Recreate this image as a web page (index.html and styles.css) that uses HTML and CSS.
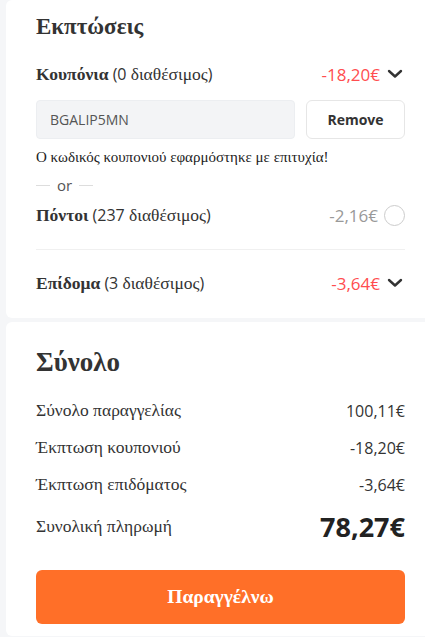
FILE: index.html
```html
<!DOCTYPE html>
<html lang="el">
<head>
    <meta charset="UTF-8">
    <meta name="viewport" content="width=device-width, initial-scale=1.0">
    <title>Ολοκλήρωση παραγγελίας</title>
    <link rel="stylesheet" href="styles.css">
</head>
<body>

<div class="card discounts">
    <h2 class="title gr">Εκπτώσεις</h2>

    <div class="row">
        <div class="label"><b class="gr">Κουπόνια</b> (0 <span class="gr">διαθέσιμος</span>)</div>
        <div class="value red">-18,20€
            <svg class="chevron" width="16" height="10" viewBox="0 0 16 10"><path d="M2 2l6 5.5L14 2" fill="none" stroke="#333" stroke-width="2.4" stroke-linecap="round" stroke-linejoin="round"/></svg>
        </div>
    </div>

    <div class="coupon">
        <input type="text" class="coupon-input" value="BGALIP5MN">
        <button class="remove-btn">Remove</button>
    </div>
    <p class="success gr">Ο κωδικός κουπονιού εφαρμόστηκε με επιτυχία!</p>

    <div class="or"><span class="or-line"></span>or<span class="or-line"></span></div>

    <div class="row points">
        <div class="label"><b class="gr">Πόντοι</b> (237 <span class="gr">διαθέσιμος</span>)</div>
        <div class="value grey">-2,16€ <span class="radio"></span></div>
    </div>

    <div class="divider"></div>

    <div class="row">
        <div class="label"><b class="gr">Επίδομα</b> (3 <span class="gr">διαθέσιμος</span>)</div>
        <div class="value red">-3,64€
            <svg class="chevron" width="16" height="10" viewBox="0 0 16 10"><path d="M2 2l6 5.5L14 2" fill="none" stroke="#333" stroke-width="2.4" stroke-linecap="round" stroke-linejoin="round"/></svg>
        </div>
    </div>
</div>

<div class="card summary">
    <h2 class="title big gr">Σύνολο</h2>

    <div class="sum-row"><span class="gr">Σύνολο παραγγελίας</span><span>100,11€</span></div>
    <div class="sum-row"><span class="gr">Έκπτωση κουπονιού</span><span>-18,20€</span></div>
    <div class="sum-row"><span class="gr">Έκπτωση επιδόματος</span><span>-3,64€</span></div>
    <div class="sum-row total"><span class="gr">Συνολική πληρωμή</span><span class="total-price">78,27€</span></div>

    <button class="order-btn gr">Παραγγέλνω</button>
</div>

</body>
</html>
```

FILE: styles.css
```css
body {
    margin: 0;
    padding-left: 6px;
    background-color: #f5f6f8;
    font-family: "Open Sans", sans-serif;
    color: #333;
}

.gr {
    font-family: "Liberation Serif", "DejaVu Serif", serif;
}

.card {
    background-color: #fff;
    border-radius: 6px 0 0 6px;
    padding: 0 20px 0 30px;
}

.discounts {
    padding-top: 12px;
    padding-bottom: 19px;
    margin-bottom: 4px;
}

.title {
    margin: 0;
    font-size: 23px;
    font-weight: bold;
    color: #333;
    line-height: 30px;
}

.discounts .title {
    margin-bottom: 16px;
}

.row {
    display: flex;
    justify-content: space-between;
    align-items: center;
    height: 32px;
    font-size: 16px;
}

.label .gr {
    font-size: 17.5px;
}

.value {
    display: flex;
    align-items: center;
    gap: 6px;
    font-size: 17px;
}

.red {
    color: #ff4d4f;
}

.grey {
    color: #999;
}

.chevron {
    margin-left: 1px;
    margin-right: 2px;
}

.coupon {
    display: flex;
    gap: 11px;
    margin-top: 10px;
}

.coupon-input {
    flex: 1;
    min-width: 0;
    height: 39px;
    box-sizing: border-box;
    border: 1px solid #eceef1;
    border-radius: 4px;
    background-color: #f3f4f6;
    padding: 0 13px;
    font-family: "Open Sans", sans-serif;
    font-size: 14px;
    color: #555;
}

.remove-btn {
    width: 99px;
    height: 39px;
    background-color: #fff;
    border: 1px solid #e6e6e6;
    border-radius: 6px;
    font-family: "Open Sans", sans-serif;
    font-size: 14px;
    font-weight: bold;
    color: #333;
}

.success {
    margin: 9px 0 0;
    font-size: 15px;
    color: #222;
    line-height: 18px;
}

.or {
    display: flex;
    align-items: center;
    gap: 7px;
    margin-top: 9px;
    font-size: 15px;
    color: #555;
    line-height: 20px;
}

.or-line {
    width: 14px;
    height: 1px;
    background-color: #ddd;
}

.points {
    margin-top: 4px;
}

.radio {
    width: 21px;
    height: 21px;
    border: 1px solid #ccc;
    border-radius: 50%;
    box-sizing: border-box;
}

.divider {
    height: 1px;
    background-color: #f0f0f0;
    margin: 18px 0 17px;
}

.summary {
    padding-top: 25px;
    padding-bottom: 12px;
}

.title.big {
    font-size: 27px;
    margin-bottom: 15px;
}

.sum-row {
    display: flex;
    justify-content: space-between;
    align-items: center;
    height: 37px;
    font-size: 16px;
}

.sum-row .gr {
    font-size: 17.5px;
}

.total {
    height: 47px;
}

.total-price {
    font-size: 27px;
    font-weight: bold;
    color: #222;
}

.order-btn {
    display: block;
    width: 100%;
    height: 54px;
    margin-top: 20px;
    border: none;
    border-radius: 6px;
    background-color: #ff6f28;
    color: #fff;
    font-size: 19.5px;
    font-weight: bold;
}
```
